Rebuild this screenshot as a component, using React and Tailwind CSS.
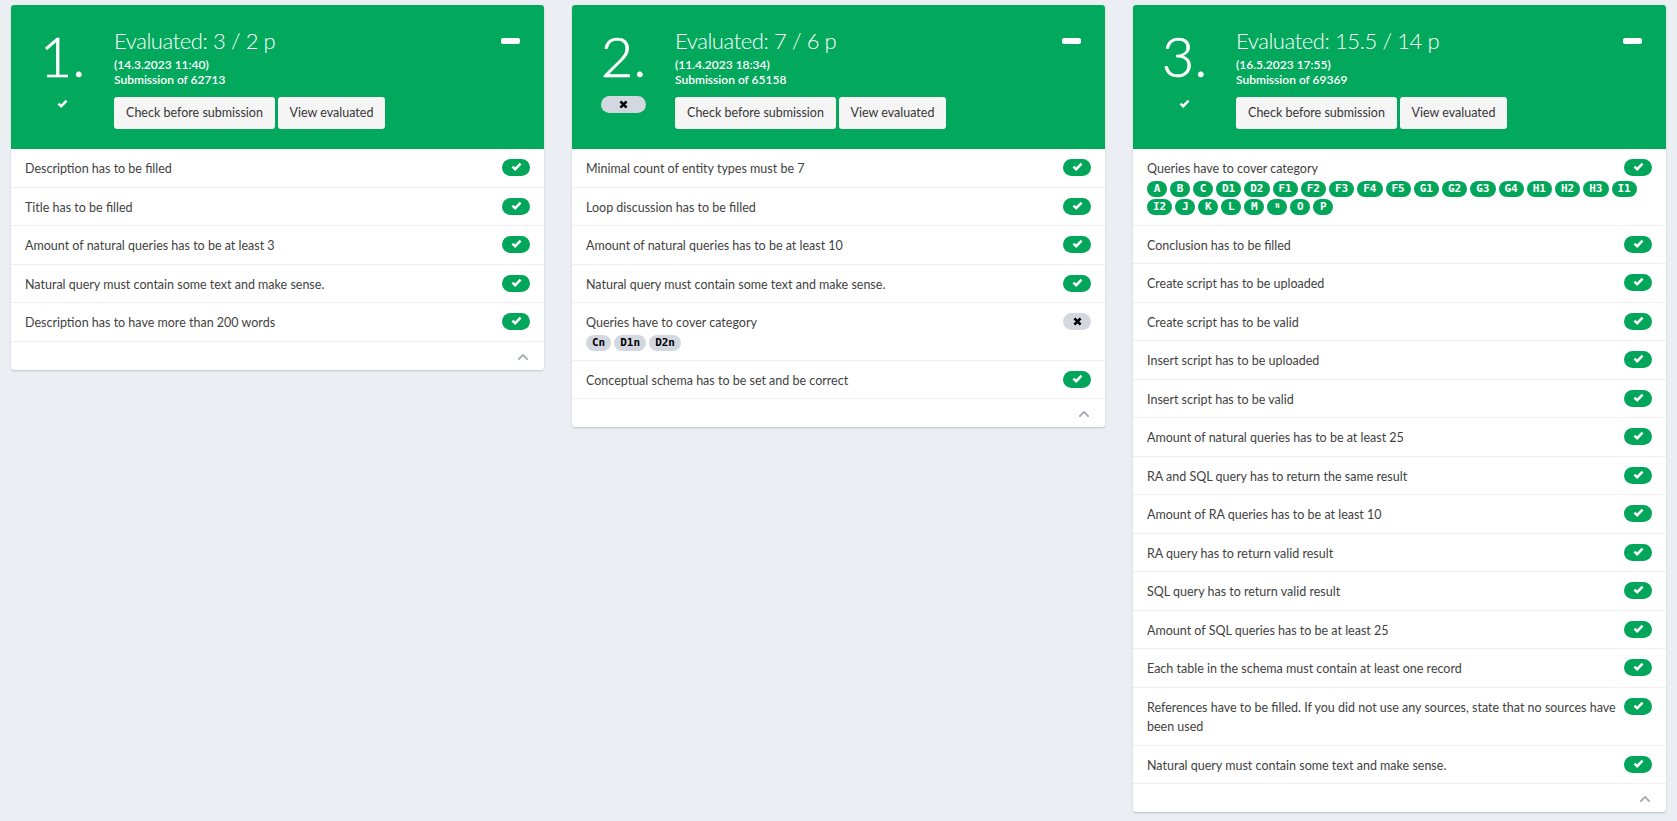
import React from 'react';
import { FaChevronUp } from 'react-icons/fa';

const cards = [
  {
    n: '1.', title: 'Evaluated: 3 / 2 p', date: '(14.3.2023 11:40)', sub: 'Submission of 62713', ok: true,
    rows: [
      { t: 'Description has to be filled' },
      { t: 'Title has to be filled' },
      { t: 'Amount of natural queries has to be at least 3' },
      { t: 'Natural query must contain some text and make sense.' },
      { t: 'Description has to have more than 200 words' },
    ],
  },
  {
    n: '2.', title: 'Evaluated: 7 / 6 p', date: '(11.4.2023 18:34)', sub: 'Submission of 65158', ok: false,
    rows: [
      { t: 'Minimal count of entity types must be 7' },
      { t: 'Loop discussion has to be filled' },
      { t: 'Amount of natural queries has to be at least 10' },
      { t: 'Natural query must contain some text and make sense.' },
      { t: 'Queries have to cover category', fail: true, chips: ['Cn', 'D1n', 'D2n'] },
      { t: 'Conceptual schema has to be set and be correct' },
    ],
  },
  {
    n: '3.', title: 'Evaluated: 15.5 / 14 p', date: '(16.5.2023 17:55)', sub: 'Submission of 69369', ok: true,
    rows: [
      {
        t: 'Queries have to cover category',
        chips: ['A', 'B', 'C', 'D1', 'D2', 'F1', 'F2', 'F3', 'F4', 'F5', 'G1', 'G2', 'G3', 'G4', 'H1', 'H2', 'H3', 'I1', 'I2', 'J', 'K', 'L', 'M', 'N', 'O', 'P'],
      },
      { t: 'Conclusion has to be filled' },
      { t: 'Create script has to be uploaded' },
      { t: 'Create script has to be valid' },
      { t: 'Insert script has to be uploaded' },
      { t: 'Insert script has to be valid' },
      { t: 'Amount of natural queries has to be at least 25' },
      { t: 'RA and SQL query has to return the same result' },
      { t: 'Amount of RA queries has to be at least 10' },
      { t: 'RA query has to return valid result' },
      { t: 'SQL query has to return valid result' },
      { t: 'Amount of SQL queries has to be at least 25' },
      { t: 'Each table in the schema must contain at least one record' },
      { t: 'References have to be filled. If you did not use any sources, state that no sources have been used' },
      { t: 'Natural query must contain some text and make sense.' },
    ],
  },
];

function CheckIcon() {
  return (
    <svg width="11" height="9" viewBox="0 0 11 9" className="mb-[2px]">
      <path d="M1.4 4.6 L4.2 7.2 L9.6 1.6" fill="none" stroke="currentColor" strokeWidth="2.5" />
    </svg>
  );
}

function CrossIcon() {
  return (
    <svg width="9" height="9" viewBox="0 0 9 9" className="mb-[1px]">
      <path d="M1.4 1.4 L7.6 7.6 M7.6 1.4 L1.4 7.6" fill="none" stroke="currentColor" strokeWidth="2.6" />
    </svg>
  );
}

function Badge({ fail }) {
  return (
    <span className={`mt-[1px] flex h-[17px] w-[28px] flex-none items-center justify-center rounded-full ${fail ? 'bg-[#d3d8e0] text-black' : 'bg-[#02a65a] text-white'}`}>
      {fail ? <CrossIcon /> : <CheckIcon />}
    </span>
  );
}

function Chip({ label, fail }) {
  return (
    <span className={`flex h-[16px] min-w-[20px] items-center justify-center rounded-full px-[6px] font-['DejaVu_Sans_Mono',monospace] font-bold ${label === 'N' ? 'text-[7px]' : 'text-[11px]'} ${fail ? 'bg-[#d3d8e0] text-black' : 'bg-[#02a65a] text-white'}`}>
      {label}
    </span>
  );
}

function Card({ card }) {
  return (
    <div className="overflow-hidden rounded-[3px] bg-white shadow-[0_1px_2px_rgba(10,10,10,0.2)]">
      {/* Header */}
      <div className="flex h-[144px] bg-[#02a85c] text-white">
        <div className="flex w-[103px] flex-none flex-col items-center pt-[19px]">
          <div className="text-[56px] font-light leading-[64px] [-webkit-text-stroke:0.6px_white]">{card.n}</div>
          {card.ok ? (
            <div className="mt-[11px] flex h-[11px] items-center"><CheckIcon /></div>
          ) : (
            <div className="mt-[8px]">
              <span className="flex h-[17px] w-[45px] items-center justify-center rounded-full bg-[#d3d8e0] text-black">
                <CrossIcon />
              </span>
            </div>
          )}
        </div>
        <div className="flex-1 pt-[20px]">
          <div className="text-[22px] font-light leading-[32px] tracking-[-0.4px]">{card.title}</div>
          <div className="text-[12px] font-semibold leading-[15px]">{card.date}</div>
          <div className="text-[12px] font-semibold leading-[15px]">{card.sub}</div>
          <div className="mt-[10px] flex gap-[3px]">
            <button className="h-[32px] w-[161px] rounded-[3px] bg-[#f5f5f5] text-[12.5px] text-[#363636]">Check before submission</button>
            <button className="h-[32px] w-[107px] rounded-[3px] bg-[#f5f5f5] text-[12.5px] text-[#363636]">View evaluated</button>
          </div>
        </div>
        <div className="pr-[24px] pt-[33px]">
          <svg width="19" height="6" viewBox="0 0 19 6"><rect width="19" height="6" rx="2" fill="white" /></svg>
        </div>
      </div>
      {/* Rows */}
      {card.rows.map((row) => (
        <div key={row.t} className="border-b border-[#f0f0f0] py-[9px] px-[14px] text-[12.5px] leading-[19.5px] text-[#3f3f3f] first:pt-[10px]">
          <div className="flex justify-between gap-[4px]">
            <div className="-mb-[1px] pt-[1px]">{row.t}</div>
            <Badge fail={row.fail} />
          </div>
          {row.chips && (
            <div className={`mt-[3px] flex flex-wrap gap-x-[3px] gap-y-[2px] ${row.fail ? '' : 'mb-[1px]'}`}>
              {row.chips.map((c) => <Chip key={c} label={c} fail={row.fail} />)}
            </div>
          )}
        </div>
      ))}
      <div className="flex h-[28px] items-center justify-end pr-[15px] pt-[2px] text-[#a8adb5]">
        <FaChevronUp className="w-[12px] h-[12px]" />
      </div>
    </div>
  );
}

export default function App() {
  return (
    <div className="min-h-[821px] bg-[#ebeff4] font-['Lato',sans-serif]">
      <div className="grid grid-cols-3 items-start gap-[28px] px-[11px] pt-[5px]">
        {cards.map((card) => <Card key={card.n} card={card} />)}
      </div>
    </div>
  );
}
